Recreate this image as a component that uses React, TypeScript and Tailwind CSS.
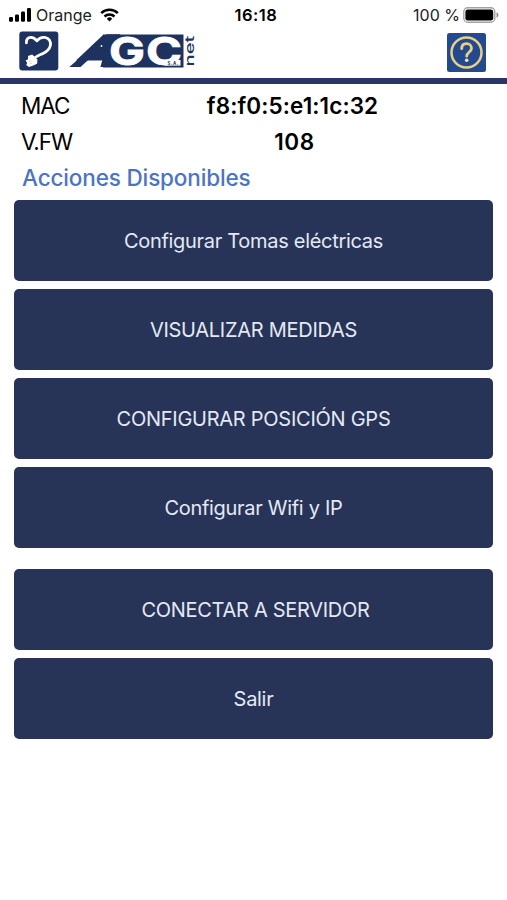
import React from "react"
import clsx from "clsx"

interface Action {
  label: string;
  className: string;
}

const mainActions: Action[] = [
  { label: "Configurar Tomas eléctricas", className: "tracking-[-0.3px]" },
  { label: "VISUALIZAR MEDIDAS", className: "tracking-[-0.28px]" },
  { label: "CONFIGURAR POSICIÓN GPS", className: "tracking-[-0.26px]" },
  { label: "Configurar Wifi y IP", className: "tracking-[-0.3px]" },
]

const sessionActions: Action[] = [
  { label: "CONECTAR A SERVIDOR", className: "pl-1 tracking-[-0.3px]" },
  { label: "Salir", className: "tracking-[-0.3px]" },
]

function SignalIcon() {
  return (
    <svg width="24" height="14" viewBox="0 0 24 14" className="fill-black">
      <rect x="0" y="9" width="4" height="4.8" rx="1.2" />
      <rect x="6" y="6.5" width="4" height="7.3" rx="1.2" />
      <rect x="12" y="3.5" width="4" height="10.3" rx="1.2" />
      <rect x="18" y="0" width="4" height="13.8" rx="1.2" />
    </svg>
  )
}

function WifiIcon() {
  return (
    <svg width="19" height="14" viewBox="0 0 19 14" fill="none" stroke="#000" strokeWidth="2.5">
      <path d="M1.2 5.1a12 12 0 0 1 16.6 0" />
      <path d="M4.5 8.5a7.2 7.2 0 0 1 10 0" />
      <path d="M9.5 13.4L6.8 10.7a3.8 3.8 0 0 1 5.4 0z" fill="#000" stroke="none" />
    </svg>
  )
}

function BatteryIcon() {
  return (
    <svg width="36" height="16" viewBox="0 0 36 16">
      <rect x="0.8" y="0.8" width="31" height="14.4" rx="4" fill="#fff" stroke="#a3a3a3" strokeWidth="1.4" />
      <rect x="2.4" y="2.4" width="27.8" height="11.2" rx="2.4" />
      <path d="M33.5 5.2q2 .8 2 2.8t-2 2.8z" fill="#8f8f8f" />
    </svg>
  )
}

function PlugLogo() {
  return (
    <svg width="40" height="40" viewBox="0 0 40 40">
      <rect x="0.3" y="0.6" width="39" height="39" rx="3" fill="#1e3260" />
      <path
        d="M7.4 11.8C7.2 8.2 9 6.4 11.8 6.4C14.6 6.4 16.2 7.6 17.9 9.8C19.8 7.4 22.6 6 25.8 6.4C30.2 7 32.2 10.6 31.3 14.8C30.4 18.6 27.5 20.8 24 22.4C20.5 24 18.5 24.6 15.5 27"
        fill="none"
        stroke="#fff"
        strokeWidth="2.8"
        strokeLinecap="round"
        strokeLinejoin="round"
      />
      <path d="M9 25L13.2 23.4L18.4 28.6L18.2 32.4L15 34.2L10 36L7.2 34L8.2 32L6.6 29.6L9 28.2z" fill="#fff" />
      <path d="M10 30.6l2.4-.8M10.5 33l2.4-.8" stroke="#a9b1c4" strokeWidth="0.6" />
    </svg>
  )
}

function BrandLogo() {
  return (
    <svg
      width="130"
      height="36"
      viewBox="0 0 130 36"
      className="overflow-visible"
      fontFamily="Inter, 'Liberation Sans', sans-serif"
    >
      {/* plate behind the letters, its left edge follows the slope of the A */}
      <path d="M35 1.4H115.5V34.4H35z" fill="#1e3260" />
      <path d="M35.5 1.4L8 27.5H35.5z" fill="#1e3260" />
      <text
        transform="translate(0 34.4) skewX(-35) scale(1.3 1)"
        fontSize="45"
        fontWeight="800"
        fill="#1e3260"
      >
        A
      </text>
      <circle cx="33.5" cy="13" r="0.9" fill="#fff" />
      <text x="41" y="32.2" fontSize="38.5" fontWeight="700" fill="#fff" stroke="#fff" strokeWidth="0.8" textLength="36" lengthAdjust="spacingAndGlyphs">
        G
      </text>
      <text x="78" y="32.2" fontSize="38.5" fontWeight="700" fill="#fff" stroke="#fff" strokeWidth="0.8" textLength="36" lengthAdjust="spacingAndGlyphs">
        C
      </text>
      <path d="M97 27H112.5V32.6H97z" fill="#fff" />
      <text x="99.5" y="31.5" fontSize="4.4" fontWeight="700" fill="#1e3260" textLength="11">
        S.A.
      </text>
      <text transform="translate(125.6 33.5) rotate(-90)" fontSize="12.5" fontWeight="500" fill="#1e3260" textLength="31" lengthAdjust="spacingAndGlyphs">
        net
      </text>
    </svg>
  )
}

function HelpButton() {
  return (
    <button aria-label="Ayuda">
      <svg width="39" height="39" viewBox="0 0 39 39">
        <rect width="39" height="39" rx="2.5" fill="#234a8e" />
        <circle cx="19.5" cy="19.5" r="15" fill="none" stroke="#e9cf85" strokeWidth="2.5" />
        <path
          d="M14.7 15.7c0-3.2 2.1-5 4.9-5s4.9 1.8 4.9 4.5c0 3.6-4.8 4-4.8 8"
          fill="none"
          stroke="#e9cf85"
          strokeWidth="2.8"
          strokeLinecap="round"
        />
        <circle cx="19.7" cy="27.3" r="1.8" fill="#f3e6bb" />
      </svg>
    </button>
  )
}

function ActionButton({ label, className }: Action) {
  return (
    <button className="flex h-[81px] w-full items-center justify-center rounded-[5px] bg-[#273457] text-[20px] text-[#e4e9f5]">
      <span className={clsx("whitespace-nowrap", className)}>{label}</span>
    </button>
  )
}

export default function App() {
  return (
    <div className="h-[900px] w-[507px] overflow-hidden bg-white font-[Inter,'Liberation_Sans',sans-serif] text-black">
      <div className="grid h-[30px] grid-cols-3 items-center pr-2 pl-[9px] text-[16px] leading-none">
        <div className="flex items-center text-[#222]">
          <SignalIcon />
          <span className="ml-[3px] mr-2">Orange</span>
          <WifiIcon />
        </div>
        <span className="pl-[4px] text-center text-[16.5px] font-semibold tracking-[0.5px]">16:18</span>
        <div className="flex items-center justify-end gap-[3px] whitespace-nowrap text-[#222]">
          <span>100 %</span>
          <BatteryIcon />
        </div>
      </div>

      <header className="flex h-[54px] items-start border-b-[6px] border-[#273664] pt-px pr-[21px] pl-[19px]">
        <PlugLogo />
        <div className="ml-[9px] pt-[2px]">
          <BrandLogo />
        </div>
        <div className="ml-auto pt-[2px]">
          <HelpButton />
        </div>
      </header>

      <main className="px-[14px]">
        <dl className="grid grid-cols-[126px_1fr] pt-1 pl-[7px] text-[22.5px] leading-9">
          <dt className="tracking-[-1.1px]">MAC</dt>
          <dd className="pr-[55px] text-center font-semibold tracking-[0.1px]">f8:f0:5:e1:1c:32</dd>
          <dt className="tracking-[-1px]">V.FW</dt>
          <dd className="pr-[51px] text-center font-semibold tracking-[0.5px]">108</dd>
        </dl>
        <h1 className="h-[40px] pl-2 text-[22.5px] leading-[35px] font-medium tracking-[-0.15px] text-[#4c74c4]">
          Acciones Disponibles
        </h1>

        <div className="flex flex-col gap-2">
          {mainActions.map((action) => (
            <ActionButton key={action.label} {...action} />
          ))}
        </div>
        <div className="mt-[21px] flex flex-col gap-2">
          {sessionActions.map((action) => (
            <ActionButton key={action.label} {...action} />
          ))}
        </div>
      </main>
    </div>
  )
}
